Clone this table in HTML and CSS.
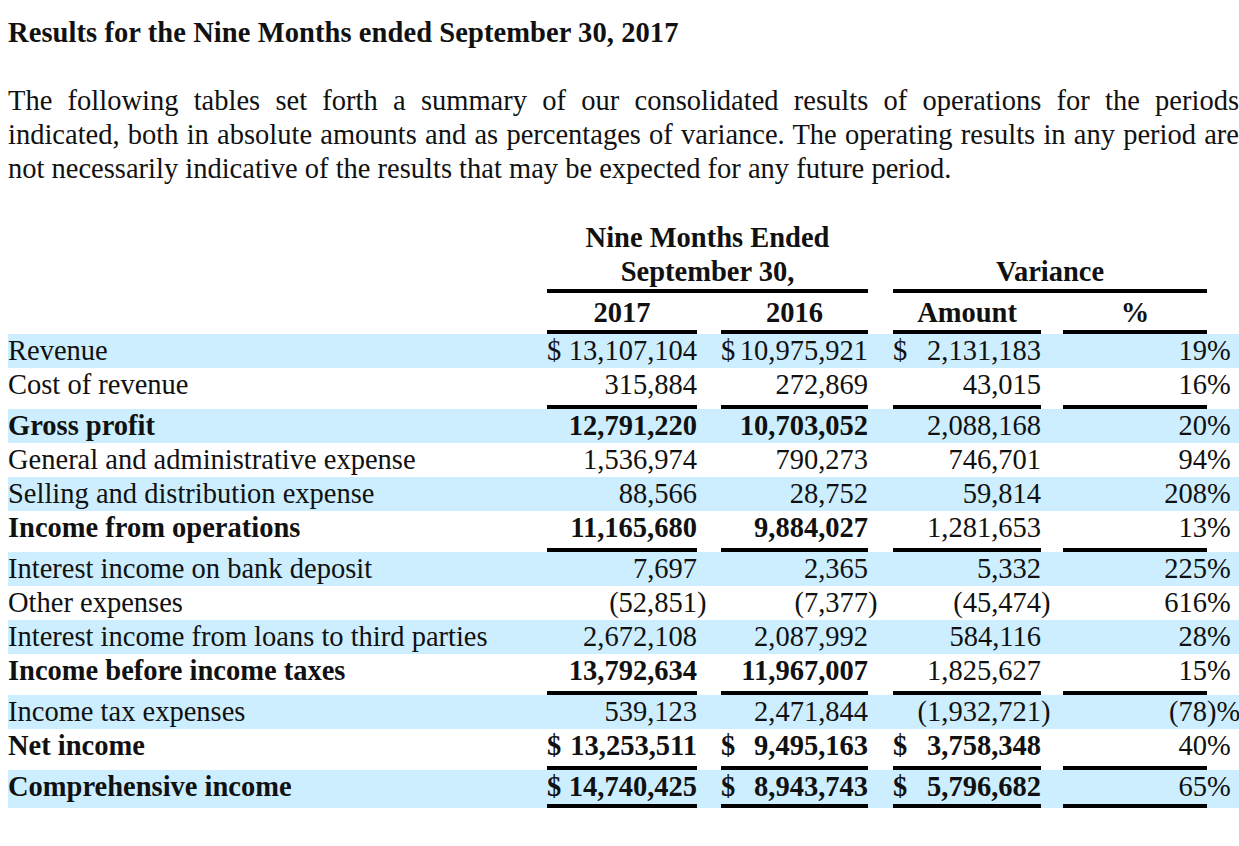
FILE: index.html
```html
<!DOCTYPE html>
<html>
<head>
<meta charset="utf-8">
<link rel="stylesheet" href="styles.css">
</head>
<body>
<div class="page">
  <h1 class="title">Results for the Nine Months ended September 30, 2017</h1>
  <p class="intro">
    <span class="line full">The following tables set forth a summary of our consolidated results of operations for the periods</span>
    <span class="line full">indicated, both in absolute amounts and as percentages of variance. The operating results in any period are</span>
    <span class="line">not necessarily indicative of the results that may be expected for any future period.</span>
  </p>
  <table class="results">
    <colgroup>
      <col class="w-label"><col class="w-c1"><col class="w-g1"><col class="w-c2"><col class="w-g2"><col class="w-c3"><col class="w-g3"><col class="w-c4"><col class="w-tail">
    </colgroup>
    <thead>
      <tr class="h1">
        <th></th><th colspan="3">Nine Months Ended</th><th></th><th colspan="3"></th><th></th>
      </tr>
      <tr class="h2">
        <th></th><th colspan="3" class="ul">September 30,</th><th></th><th colspan="3" class="ul">Variance</th><th></th>
      </tr>
      <tr class="h3">
        <th></th><th class="ul">2017</th><th></th><th class="ul">2016</th><th></th><th class="ul">Amount</th><th></th><th class="ul">%</th><th></th>
      </tr>
    </thead>
    <tbody>
      <tr class="band">
        <td class="lbl">Revenue</td>
        <td class="num"><span class="cur">$</span>13,107,104</td><td></td>
        <td class="num"><span class="cur">$</span>10,975,921</td><td></td>
        <td class="num"><span class="cur">$</span>2,131,183</td><td></td>
        <td class="num">19</td><td class="sfx">%</td>
      </tr>
      <tr class="under">
        <td class="lbl">Cost of revenue</td>
        <td class="num ul">315,884</td><td></td>
        <td class="num ul">272,869</td><td></td>
        <td class="num ul">43,015</td><td></td>
        <td class="num ul">16</td><td class="sfx">%</td>
      </tr>
      <tr class="band strong">
        <td class="lbl">Gross profit</td>
        <td class="num">12,791,220</td><td></td>
        <td class="num">10,703,052</td><td></td>
        <td class="num reg">2,088,168</td><td></td>
        <td class="num reg">20</td><td class="sfx reg">%</td>
      </tr>
      <tr>
        <td class="lbl">General and administrative expense</td>
        <td class="num">1,536,974</td><td></td>
        <td class="num">790,273</td><td></td>
        <td class="num">746,701</td><td></td>
        <td class="num">94</td><td class="sfx">%</td>
      </tr>
      <tr class="band">
        <td class="lbl">Selling and distribution expense</td>
        <td class="num">88,566</td><td></td>
        <td class="num">28,752</td><td></td>
        <td class="num">59,814</td><td></td>
        <td class="num">208</td><td class="sfx">%</td>
      </tr>
      <tr class="under strong">
        <td class="lbl">Income from operations</td>
        <td class="num ul">11,165,680</td><td></td>
        <td class="num ul">9,884,027</td><td></td>
        <td class="num ul reg">1,281,653</td><td></td>
        <td class="num ul reg">13</td><td class="sfx reg">%</td>
      </tr>
      <tr class="band">
        <td class="lbl">Interest income on bank deposit</td>
        <td class="num">7,697</td><td></td>
        <td class="num">2,365</td><td></td>
        <td class="num">5,332</td><td></td>
        <td class="num">225</td><td class="sfx">%</td>
      </tr>
      <tr>
        <td class="lbl">Other expenses</td>
        <td class="num">(52,851</td><td class="sfx">)</td>
        <td class="num">(7,377</td><td class="sfx">)</td>
        <td class="num">(45,474</td><td class="sfx">)</td>
        <td class="num">616</td><td class="sfx">%</td>
      </tr>
      <tr class="band">
        <td class="lbl">Interest income from loans to third parties</td>
        <td class="num">2,672,108</td><td></td>
        <td class="num">2,087,992</td><td></td>
        <td class="num">584,116</td><td></td>
        <td class="num">28</td><td class="sfx">%</td>
      </tr>
      <tr class="under strong">
        <td class="lbl">Income before income taxes</td>
        <td class="num ul">13,792,634</td><td></td>
        <td class="num ul">11,967,007</td><td></td>
        <td class="num ul reg">1,825,627</td><td></td>
        <td class="num ul reg">15</td><td class="sfx reg">%</td>
      </tr>
      <tr class="band">
        <td class="lbl">Income tax expenses</td>
        <td class="num">539,123</td><td></td>
        <td class="num">2,471,844</td><td></td>
        <td class="num">(1,932,721</td><td class="sfx">)</td>
        <td class="num">(78</td><td class="sfx">)%</td>
      </tr>
      <tr class="under strong">
        <td class="lbl">Net income</td>
        <td class="num ul"><span class="cur">$</span>13,253,511</td><td></td>
        <td class="num ul"><span class="cur">$</span>9,495,163</td><td></td>
        <td class="num ul"><span class="cur">$</span>3,758,348</td><td></td>
        <td class="num ul reg">40</td><td class="sfx reg">%</td>
      </tr>
      <tr class="band strong last">
        <td class="lbl">Comprehensive income</td>
        <td class="num ul"><span class="cur">$</span>14,740,425</td><td></td>
        <td class="num ul"><span class="cur">$</span>8,943,743</td><td></td>
        <td class="num ul"><span class="cur">$</span>5,796,682</td><td></td>
        <td class="num ul reg">65</td><td class="sfx reg">%</td>
      </tr>
    </tbody>
  </table>
</div>
</body>
</html>
```
FILE: styles.css
```css
html, body {
  margin: 0;
  padding: 0;
  background: #ffffff;
}

body {
  font-family: "Liberation Serif", "Times New Roman", serif;
  color: #111111;
  font-size: 28.5px;
}

.page {
  width: 1231px;
  padding: 16px 0 0 8px;
}

.title {
  margin: 0;
  font-size: 28.5px;
  font-weight: bold;
  line-height: 34px;
  letter-spacing: 0.08px;
}

.intro {
  margin: 34px 0 0 0;
  line-height: 34px;
}

.intro .line {
  display: block;
  white-space: nowrap;
}

.intro .line.full {
  text-align: justify;
  text-align-last: justify;
}

.results {
  margin-top: 35px;
  width: 1231px;
  table-layout: fixed;
  border-collapse: separate;
  border-spacing: 0;
}

.w-label { width: 539px; }
.w-c1 { width: 150px; }
.w-g1 { width: 24px; }
.w-c2 { width: 147px; }
.w-g2 { width: 25px; }
.w-c3 { width: 148px; }
.w-g3 { width: 22px; }
.w-c4 { width: 144px; }
.w-tail { width: 32px; }

.results th,
.results td {
  padding: 0;
  line-height: 34px;
  height: 34px;
  white-space: nowrap;
  vertical-align: top;
}

.results th {
  font-weight: bold;
  text-align: center;
}

.results th.ul {
  border-bottom: 4px solid #000;
}

.h3 th {
  padding-top: 3px;
}

.band {
  background: #cceeff;
}

.lbl {
  text-align: left;
  overflow: visible;
}

.num {
  text-align: right;
}

.sfx {
  text-align: left;
  overflow: visible;
}

.cur {
  float: left;
}

.strong td {
  font-weight: bold;
}

.strong td.reg {
  font-weight: normal;
}

.under td {
  padding-bottom: 3px;
}

.results td.ul {
  border-bottom: 4px solid #000;
}

.last td {
  padding-bottom: 0;
}
```
